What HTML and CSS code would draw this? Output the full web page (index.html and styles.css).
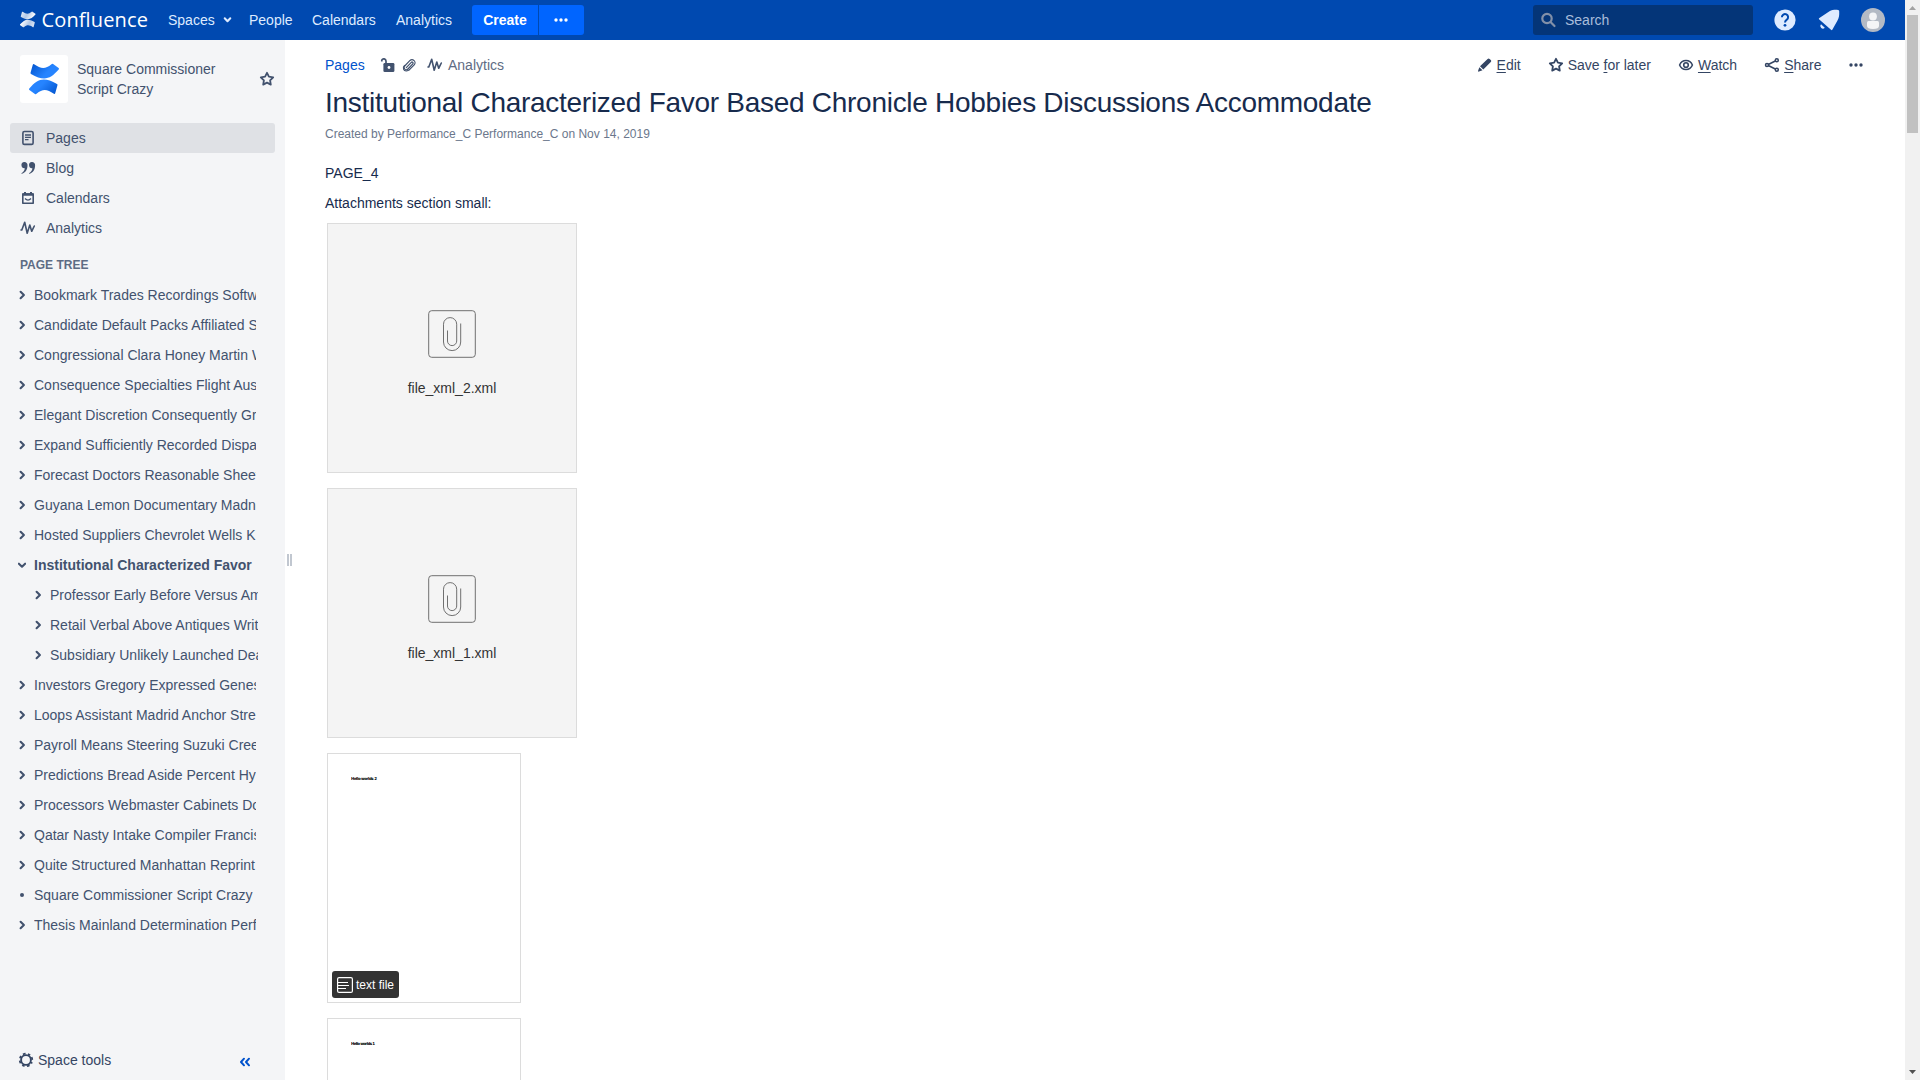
FILE: index.html
```html
<!DOCTYPE html>
<html lang="en">
<head>
<meta charset="utf-8">
<title>Institutional Characterized Favor - Confluence</title>
<link rel="stylesheet" href="styles.css">
</head>
<body>
<svg width="0" height="0" class="defs">
  <defs>
    <linearGradient id="ga" x1="0" y1="0" x2="1" y2=".5"><stop offset="0" stop-color="#0052cc"/><stop offset=".7" stop-color="#2684ff"/></linearGradient>
    <linearGradient id="gw" x1="0" y1="0" x2="1" y2=".3"><stop offset="0" stop-color="#fff" stop-opacity=".9"/><stop offset=".5" stop-color="#fff" stop-opacity=".7"/><stop offset="1" stop-color="#fff"/></linearGradient>
    <path id="ribbon" d="M12.800 9.700q.4-1 1.300-.5C21 13.800 25 14.500 31.500 9.200q.8-.6 1.600-.1l5.500 4q.8.700.1 1.500C30 24.500 24 26.500 11 19q-.8-.5-.4-1.400z"/>
    <symbol id="star" viewBox="0 0 16 16"><path d="M8 1.800l1.900 3.900 4.300.6-3.100 3 .7 4.300L8 11.600l-3.800 2 .7-4.300-3.100-3 4.300-.6z" fill="none" stroke="currentColor" stroke-width="1.800" stroke-linejoin="round"/></symbol>
    <symbol id="pulse" viewBox="0 0 16 16"><path d="M1 10h.8L4.700 2.300 7.200 13.300l2.600-8.300 1.900 6.300 2.600-5.300" fill="none" stroke="currentColor" stroke-width="1.600" stroke-linecap="round" stroke-linejoin="round"/></symbol>
    <symbol id="right" viewBox="0 0 8 10"><path d="M2.600 1.800L5.900 5 2.600 8.200" fill="none" stroke="currentColor" stroke-width="2.100" stroke-linecap="round" stroke-linejoin="round"/></symbol>
    <symbol id="dots" viewBox="0 0 14 4"><path d="M2 .3a1.700 1.700 0 1 1 0 3.400 1.700 1.700 0 0 1 0-3.400zm5 0a1.700 1.700 0 1 1 0 3.400 1.700 1.700 0 0 1 0-3.400zm5 0a1.700 1.700 0 1 1 0 3.400 1.700 1.700 0 0 1 0-3.400z" fill="currentColor"/></symbol>
    <symbol id="file" viewBox="0 0 48 48"><rect x=".7" y=".7" width="46.600" height="46.600" rx="3" fill="none" stroke="currentColor"/><path d="M19.500 20.500v10.500a4.600 4.600 0 0 0 9.200 0V14.200a6.600 6.600 0 0 0-13.200 0v17.800a8.600 8.600 0 0 0 17.200 0V13.500" fill="none" stroke="currentColor"/></symbol>
  </defs>
</svg>
<div class="app">
  <header class="header">
    <a class="brand">
      <svg width="130" height="40" viewBox="0 0 130 40">
        <g transform="translate(-4.700 7) scale(.52)" fill="url(#gw)"><use href="#ribbon"/><use href="#ribbon" transform="rotate(180 24 24)"/></g>
        <text x="21.500" y="27" textLength="106.500" class="wordmark">Confluence</text>
      </svg>
    </a>
    <nav class="topnav">
      <a class="spaces">Spaces <svg width="9" height="8" viewBox="0 0 8 8"><path d="M1.200 2.300L4 5.300l2.800-3" fill="none" stroke="#deebff" stroke-width="2" stroke-linecap="round" stroke-linejoin="round"/></svg></a>
      <a class="people">People</a><a class="cal">Calendars</a><a class="ana">Analytics</a>
    </nav>
    <div class="create"><b>Create</b><span><svg width="14" height="4"><use href="#dots"/></svg></span></div>
    <div class="search"><svg width="16" height="16" viewBox="0 0 16 16"><circle cx="6" cy="6.500" r="4.700"/><path d="M9.500 10l4 4"/></svg>Search</div>
    <svg class="help" width="22" height="22" viewBox="0 0 22 22"><circle cx="11" cy="11" r="10.600" fill="#deebff"/><path d="M7.900 8.200a3.100 3.100 0 1 1 4.900 2.500c-1.200.8-1.800 1.200-1.800 2.700" fill="none" stroke="#0049b0" stroke-width="2"/><circle cx="11" cy="16.300" r="1.400" fill="#0049b0"/></svg>
    <svg class="bell" width="22" height="22" viewBox="0 0 22 22"><path d="M11.500 2.200C14 1 17.500.6 20 1c1.300.3 1.300.8 1.200 2 .2 3-.2 6-1.700 8.500l-5.200 9.300q-.6.800-1.300 0L1 10.200q-.5-.9.400-1.300z" fill="#deebff"/><path d="M3 15.300l3.800 3.400A2.500 2.500 0 0 1 3 15.300z" fill="#deebff"/></svg>
    <svg class="avatar" width="24" height="24" viewBox="0 0 24 24"><circle cx="12" cy="12" r="12" fill="#b3bac5"/><circle cx="12" cy="8.500" r="3.900" fill="#f4f5f7"/><path d="M6 14.500q0-1.500 1.500-1.500h9q1.500 0 1.500 1.500V18q0 3-6 3t-6-3z" fill="#f4f5f7"/></svg>
  </header>
  <div class="body">
    <aside class="sidebar">
      <div class="space">
        <div class="space-logo"><svg width="48" height="48" viewBox="0 0 48 48" fill="url(#ga)"><use href="#ribbon"/><use href="#ribbon" transform="rotate(180 24 24)"/></svg></div>
        <div class="space-name">Square Commissioner Script Crazy</div>
        <svg width="16" height="16"><use href="#star"/></svg>
      </div>
      <nav class="side-nav">
        <a class="active"><svg width="16" height="16" viewBox="0 0 16 16"><rect x="2.900" y="1.500" width="10.200" height="12.900" rx="1.500" fill="none" stroke="currentColor" stroke-width="1.600"/><path d="M5 5h6M5 7.300h6M5 9.600h3.500" stroke="currentColor" stroke-width="1.300"/></svg>Pages</a>
        <a><svg width="16" height="16" viewBox="0 0 16 16"><path d="M4.300 2a3 3 0 0 1 3.200 3.300c0 4-2 7.500-5.500 8.500q-.6 0-.6-.6c2.200-1.300 3.200-3 3.400-5A3 3 0 1 1 4.300 2zm7.600 0a3 3 0 0 1 3.200 3.300c0 4-2 7.500-5.500 8.500q-.6 0-.6-.6c2.200-1.300 3.200-3 3.400-5A3 3 0 1 1 11.900 2z" fill="currentColor"/></svg>Blog</a>
        <a><svg width="16" height="16" viewBox="0 0 16 16"><path d="M2.800 4h10.400v9.200H2.800z" fill="none" stroke="currentColor" stroke-width="1.600" stroke-linejoin="round"/><path d="M2.500 3.300h11v2.500h-11zM4 2h2v2H4zm6 0h2v2h-2z" fill="currentColor"/><path d="M5 8.500q3 3.200 6 0" fill="none" stroke="currentColor" stroke-width="1.300"/></svg>Calendars</a>
        <a><svg width="16" height="16"><use href="#pulse"/></svg>Analytics</a>
      </nav>
      <h2 class="tree-title">PAGE TREE</h2>
      <ul class="tree">
        <li><svg><use href="#right"/></svg><span>Bookmark Trades Recordings Software</span></li>
        <li><svg><use href="#right"/></svg><span>Candidate Default Packs Affiliated Systems</span></li>
        <li><svg><use href="#right"/></svg><span>Congressional Clara Honey Martin Wells</span></li>
        <li><svg><use href="#right"/></svg><span>Consequence Specialties Flight Australia</span></li>
        <li><svg><use href="#right"/></svg><span>Elegant Discretion Consequently Greatly</span></li>
        <li><svg><use href="#right"/></svg><span>Expand Sufficiently Recorded Disparate</span></li>
        <li><svg><use href="#right"/></svg><span>Forecast Doctors Reasonable Sheets</span></li>
        <li><svg><use href="#right"/></svg><span>Guyana Lemon Documentary Madness</span></li>
        <li><svg><use href="#right"/></svg><span>Hosted Suppliers Chevrolet Wells K</span></li>
        <li class="current"><svg viewBox="0 0 8 10"><path d="M.9 3.700L4 6.700l3.100-3" fill="none" stroke="currentColor" stroke-width="2.100" stroke-linecap="round" stroke-linejoin="round"/></svg><span>Institutional Characterized Favor</span></li>
        <li class="child"><svg><use href="#right"/></svg><span>Professor Early Before Versus Amateur</span></li>
        <li class="child"><svg><use href="#right"/></svg><span>Retail Verbal Above Antiques Writ</span></li>
        <li class="child"><svg><use href="#right"/></svg><span>Subsidiary Unlikely Launched Deals</span></li>
        <li><svg><use href="#right"/></svg><span>Investors Gregory Expressed Genesis</span></li>
        <li><svg><use href="#right"/></svg><span>Loops Assistant Madrid Anchor Stre</span></li>
        <li><svg><use href="#right"/></svg><span>Payroll Means Steering Suzuki Creek</span></li>
        <li><svg><use href="#right"/></svg><span>Predictions Bread Aside Percent Hy</span></li>
        <li><svg><use href="#right"/></svg><span>Processors Webmaster Cabinets Dollar</span></li>
        <li><svg><use href="#right"/></svg><span>Qatar Nasty Intake Compiler Francis</span></li>
        <li><svg><use href="#right"/></svg><span>Quite Structured Manhattan Reprint</span></li>
        <li><svg viewBox="0 0 8 10"><circle cx="4" cy="5" r="2" fill="currentColor"/></svg><span>Square Commissioner Script Crazy</span></li>
        <li><svg><use href="#right"/></svg><span>Thesis Mainland Determination Perfect</span></li>
      </ul>
      <div class="tools">
        <svg width="16" height="16" viewBox="0 0 16 16"><circle cx="8" cy="8" r="4.900" fill="none" stroke="currentColor" stroke-width="1.900"/><circle cx="8" cy="8" r="6.300" fill="none" stroke="currentColor" stroke-width="1.700" stroke-dasharray="2.600 2.348" stroke-dashoffset="1.300" transform="rotate(22.500 8 8)"/></svg>
        <span>Space tools</span>
        <svg class="collapse" width="12" height="10" viewBox="0 0 12 10"><path d="M5 1.700L2 5l3 3.300M10 1.700L7 5l3 3.300" fill="none" stroke="#0052cc" stroke-width="2" stroke-linecap="round" stroke-linejoin="round"/></svg>
      </div>
    </aside>
    <div class="splitter"><i></i><i></i></div>
    <main class="main">
      <div class="bar">
        <a class="crumb">Pages</a>
        <svg class="lock" width="16" height="16" viewBox="0 0 16 16"><rect x="3.400" y="6" width="11" height="9" rx="1.300" fill="currentColor"/><path d="M6 7V4a2.200 2.200 0 0 0-4.200-.8v1.300" fill="none" stroke="currentColor" stroke-width="1.700"/><circle cx="9" cy="10.500" r="1.400" fill="#fff"/></svg>
        <svg class="clip" width="14" height="14" viewBox="0 0 14 14"><path d="M4.300 9.600l5-5.200a1 1 0 0 1 1.500 1.400L5.900 11a2.100 2.100 0 0 1-3.200-3l5.100-5.300a3 3 0 0 1 4.400 4.200L7.500 11.700" fill="none" stroke="currentColor" stroke-width="1.200" stroke-linecap="round"/><path d="M7.500 11.700c-2 2-5 1.600-5.900-.4-.7-1.700 0-3 1.100-4.100" fill="none" stroke="currentColor" stroke-width="1.200"/></svg>
        <svg class="pulse" width="16" height="16"><use href="#pulse"/></svg><span class="muted">Analytics</span>
        <div class="actions">
          <a class="edit"><svg width="16" height="16" viewBox="0 0 16 16"><path d="M3 9.300l7.600-7.400q1-.9 2 0l1.200 1.200q1 1 0 2L6.300 12.600zM2.300 10.300l3.200 3-3.500 1.300q-1.200.3-.9-.9z" fill="currentColor"/></svg><span><u>E</u>dit</span></a>
          <a class="save"><svg width="16" height="16"><use href="#star"/></svg><span>Save <u>f</u>or later</span></a>
          <a class="watch"><svg width="16" height="16" viewBox="0 0 16 16"><path d="M1.600 8C4 1.900 12 1.900 14.400 8 12 14.100 4 14.100 1.600 8z" fill="none" stroke="currentColor" stroke-width="1.500"/><circle cx="8" cy="8" r="2.300" fill="none" stroke="currentColor" stroke-width="1.600"/></svg><span><u>W</u>atch</span></a>
          <a class="share"><svg width="16" height="16" viewBox="0 0 16 16"><path d="M12.800 3.200L3.200 8l9.600 4.800" fill="none" stroke="currentColor" stroke-width="1.600"/><g fill="#fff" stroke="currentColor" stroke-width="1.500"><circle cx="12.800" cy="3.200" r="1.500"/><circle cx="3" cy="8" r="1.500"/><circle cx="12.800" cy="12.800" r="1.500"/></g></svg><span><u>S</u>hare</span></a>
          <svg class="more" width="14" height="4"><use href="#dots"/></svg>
        </div>
      </div>
      <h1>Institutional Characterized Favor Based Chronicle Hobbies Discussions Accommodate</h1>
      <p class="byline">Created by Performance_C Performance_C on Nov 14, 2019</p>
      <p class="text">PAGE_4</p>
      <p class="text">Attachments section small:</p>
      <div class="files">
        <div class="card"><svg width="48" height="48"><use href="#file"/></svg><span>file_xml_2.xml</span></div>
        <div class="card"><svg width="48" height="48"><use href="#file"/></svg><span>file_xml_1.xml</span></div>
        <div class="doc"><svg width="40" height="8"><text x="0" y="5" textLength="26" class="tiny">Hello worlds 2</text></svg>
          <span class="tag"><svg width="16" height="16" viewBox="0 0 16 16"><rect x=".6" y=".6" width="14.800" height="14.800" rx="1.500"/><path d="M1 5.500h10M1 8.500h11M1 11.500h8"/></svg>text file</span></div>
        <div class="doc"><svg width="40" height="8"><text x="0" y="5" textLength="24" class="tiny">Hello worlds 1</text></svg></div>
      </div>
    </main>
  </div>
</div>
<div class="scrollbar"><svg width="15" height="15"><path d="M4 10h7L7.500 6z" fill="#a3a3a3"/></svg><div class="thumb"></div><svg width="15" height="15"><path d="M4 5h7L7.500 9z" fill="#505050"/></svg></div>
</body>
</html>
```
FILE: styles.css
```css
* { box-sizing: border-box; }
body { margin: 0; width: 1920px; height: 1080px; overflow: hidden; display: flex; background: #fff; font: 14px/20px "Liberation Sans", Arial, sans-serif; color: #172b4d; }
svg { display: block; flex: none; }
.defs { position: absolute; }
.app { width: 1905px; height: 1080px; display: flex; flex-direction: column; }

.header { height: 40px; flex: none; background: #0049b0; display: flex; align-items: center; padding-left: 20px; color: #deebff; }
.brand { width: 148px; }
.wordmark { font: 20px "Open Sans", "Noto Sans", sans-serif; fill: #fff; }
.topnav { display: flex; width: 304px; }
.spaces { width: 81px; display: flex; align-items: center; gap: 8px; }
.people { width: 63px; }
.cal { width: 84px; }
.create { display: flex; gap: 1px; height: 30px; line-height: 30px; width: 112px; color: #fff; }
.create b { width: 66px; text-align: center; background: #0065ff; border-radius: 3px 0 0 3px; }
.create span { flex: 1; display: flex; align-items: center; justify-content: center; padding-right: 2px; background: #0065ff; border-radius: 0 3px 3px 0; }
.search { margin-left: auto; width: 220px; height: 30px; border-radius: 3px; background: #043578; display: flex; align-items: center; gap: 8px; padding-left: 8px; color: #a9bddb; }
.search svg { fill: none; stroke: #8290a8; stroke-width: 2.2; stroke-linecap: round; }
.help { margin-left: 21px; }
.bell { margin-left: 22px; }
.avatar { margin: 0 20px 0 21px; }

.body { flex: 1; min-height: 0; display: flex; }
.sidebar { width: 285px; flex: none; background: #f4f5f7; color: #42526e; display: flex; flex-direction: column; }
.space { display: flex; align-items: center; padding: 15px 10px 0 20px; height: 63px; }
.space-logo { width: 48px; height: 48px; background: #fff; border-radius: 3px; margin-right: 9px; }
.space-name { width: 182px; padding-right: 36px; }
.side-nav { padding: 20px 10px 0; }
.side-nav a { display: flex; align-items: center; height: 30px; gap: 10px; padding-left: 10px; border-radius: 3px; }
.side-nav .active { background: #dfe1e5; }
.tree-title { margin: 12px 0 5px 20px; font-size: 12px; line-height: 20px; color: #5e6c84; }
.tree { list-style: none; margin: 0; padding: 0 29px 0 18px; }
.tree li { height: 30px; display: flex; align-items: center; gap: 8px; }
.tree svg { width: 8px; height: 10px; }
.tree span { flex: 1; min-width: 0; overflow: hidden; white-space: nowrap; }
.tree .current { font-weight: bold; }
.tree .child { padding-left: 16px; margin-right: -2px; }
.tools { margin-top: auto; height: 40px; display: flex; align-items: center; padding-left: 18px; gap: 4px; color: #344563; }
.collapse { margin: 3px 0 0 124px; }
.splitter { width: 9px; padding-left: 2px; display: flex; gap: 1px; align-items: center; }
.splitter i { width: 2px; height: 12px; background: #c1c7d0; }

.main { flex: 1; min-width: 0; overflow: hidden; padding: 10px 42px 0 31px; }
.bar { height: 30px; display: flex; align-items: center; color: #42526e; }
.crumb { color: #0052cc; width: 55px; }
.lock { margin-right: 6px; }
.clip { margin-right: 11px; }
.pulse { margin-right: 5px; }
.muted { color: #5e6c84; }
.actions { margin-left: auto; display: flex; align-items: center; color: #344563; }
.actions a { display: flex; align-items: center; gap: 4px; }
.actions u { text-underline-offset: 2px; }
.save { margin-left: 27px; }
.watch { margin-left: 27px; }
.share { margin-left: 27px; }
.more { margin-left: 27.5px; }
h1 { margin: 7px 0 0; font-size: 28px; line-height: 32px; font-weight: normal; letter-spacing: -0.28px; white-space: nowrap; }
.byline { margin: 5px 0 0; font-size: 12px; line-height: 20px; color: #6b778c; }
.text { margin: 10px 0 0; }
.byline + .text { margin-top: 19px; }
.files { padding: 10px 0 0 2px; display: flex; flex-direction: column; gap: 15px; }
.card, .doc { height: 250px; border: 1px solid #dcdcdc; flex: none; }
.card { width: 250px; background: #f4f4f4; display: flex; flex-direction: column; align-items: center; padding-top: 86px; color: #333; }
.card svg { color: #707070; }
.card span { margin-top: 20px; }
.doc { width: 194px; display: flex; flex-direction: column; justify-content: space-between; align-items: flex-start; padding: 21px 4px 4px; }
.doc > svg { margin-left: 19px; }
.tiny { font: bold 4px "DejaVu Sans", sans-serif; fill: #000; }
.tag { height: 27px; display: flex; align-items: center; gap: 3px; padding: 0 5px; background: #333; color: #fff; font-size: 12px; border-radius: 3px; }
.tag svg { fill: none; stroke: #fff; stroke-width: 1.200; }

.scrollbar { width: 15px; height: 1080px; background: #f1f1f1; display: flex; flex-direction: column; }
.thumb { width: 11px; height: 118px; margin: 0 auto auto 2px; background: #c1c1c1; }
```
